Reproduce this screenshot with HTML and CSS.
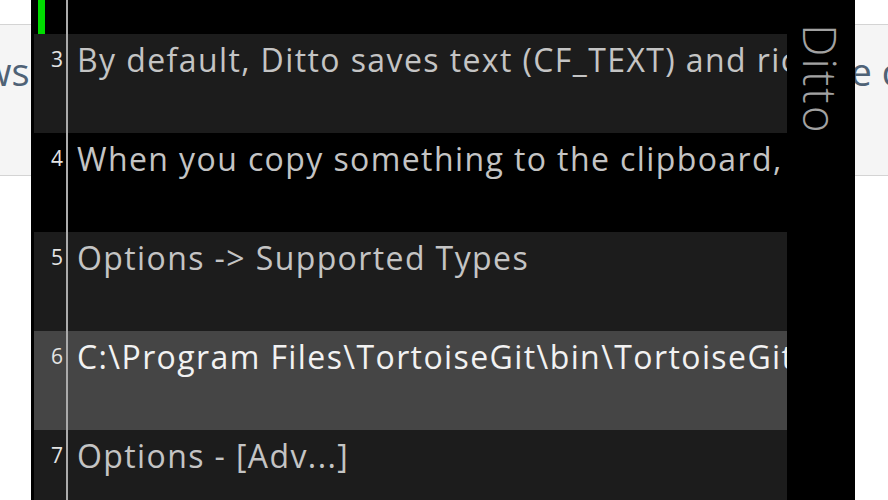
FILE: index.html
```html
<!DOCTYPE html>
<html lang="en">
<head>
<meta charset="utf-8">
<title>Ditto</title>
<link rel="stylesheet" href="styles.css">
</head>
<body>
<div class="page">
  <div class="band">
    <span class="band-left">ws</span>
    <span class="band-right">e c</span>
  </div>
  <div class="ditto">
    <div class="list">
      <div class="row row-black first">
        <div class="num"><span class="marker"></span><span class="n">2</span></div>
        <div class="text">Ditto is an extension to the standard Windows clipboard</div>
      </div>
      <div class="row row-gray">
        <div class="num"><span class="n">3</span></div>
        <div class="text">By default, Ditto saves text (CF_TEXT) and rich text (CF_RTF)</div>
      </div>
      <div class="row row-black">
        <div class="num"><span class="n">4</span></div>
        <div class="text">When you copy something to the clipboard, Ditto takes what you copied</div>
      </div>
      <div class="row row-gray">
        <div class="num"><span class="n">5</span></div>
        <div class="text">Options -&gt; Supported Types</div>
      </div>
      <div class="row row-selected">
        <div class="num"><span class="n">6</span></div>
        <div class="text">C:\Program Files\TortoiseGit\bin\TortoiseGitMerge.exe</div>
      </div>
      <div class="row row-gray">
        <div class="num"><span class="n">7</span></div>
        <div class="text">Options - [Adv...]</div>
      </div>
    </div>
    <div class="titlebar"><span class="title">Ditto</span></div>
  </div>
</div>
</body>
</html>
```
FILE: styles.css
```css
html, body {
  margin: 0;
  padding: 0;
}
body {
  background: #ffffff;
  font-family: "Open Sans", "Noto Sans", sans-serif;
}
.page {
  position: relative;
  width: 888px;
  height: 500px;
  overflow: hidden;
}
.band {
  margin-top: 24px;
  background: #f5f5f5;
  border-top: 1px solid #d4d4d4;
  border-bottom: 1px solid #d4d4d4;
  display: flex;
  align-items: flex-start;
  font-size: 38px;
  line-height: 52px;
  color: #4f6276;
  padding-top: 20px;
  box-sizing: border-box;
  height: 152px;
  white-space: nowrap;
}
.band-left {
  margin-left: -18px;
}
.band-right {
  margin-left: auto;
  margin-right: -12px;
}
.ditto {
  position: absolute;
  left: 31px;
  top: 0;
  width: 824px;
  height: 500px;
  background: #000000;
  display: flex;
}
.list {
  width: 753px;
  margin-left: 3px;
  overflow: hidden;
  display: flex;
  flex-direction: column;
}
.row {
  display: flex;
  height: 99px;
  flex-shrink: 0;
}
.row.first {
  margin-top: -65px;
}
.row-black { background: #000000; }
.row-gray { background: #1c1c1c; }
.row-selected { background: #454545; }
.num {
  width: 32px;
  flex-shrink: 0;
  border-right: 2px solid #ababab;
  display: flex;
  justify-content: flex-end;
  align-items: flex-start;
}
.n {
  font-size: 21px;
  color: #e4e4e4;
  padding-top: 11px;
  padding-right: 3px;
}
.marker {
  width: 7px;
  align-self: stretch;
  background: #00dd00;
  margin-left: 4px;
  margin-right: auto;
}
.text {
  flex: 1;
  min-width: 0;
  overflow: hidden;
  white-space: nowrap;
  padding-left: 9px;
  padding-top: 4px;
  font-size: 32px;
  letter-spacing: 1.4px;
  color: #c4c4c4;
}
.row-selected .text {
  color: #f2f2f2;
}
.titlebar {
  flex: 1;
  display: flex;
  justify-content: center;
  align-items: flex-start;
  padding-top: 24px;
}
.title {
  writing-mode: vertical-rl;
  font-size: 46px;
  font-weight: 300;
  line-height: 1;
  letter-spacing: 2px;
  color: #a2a2a2;
}
```
